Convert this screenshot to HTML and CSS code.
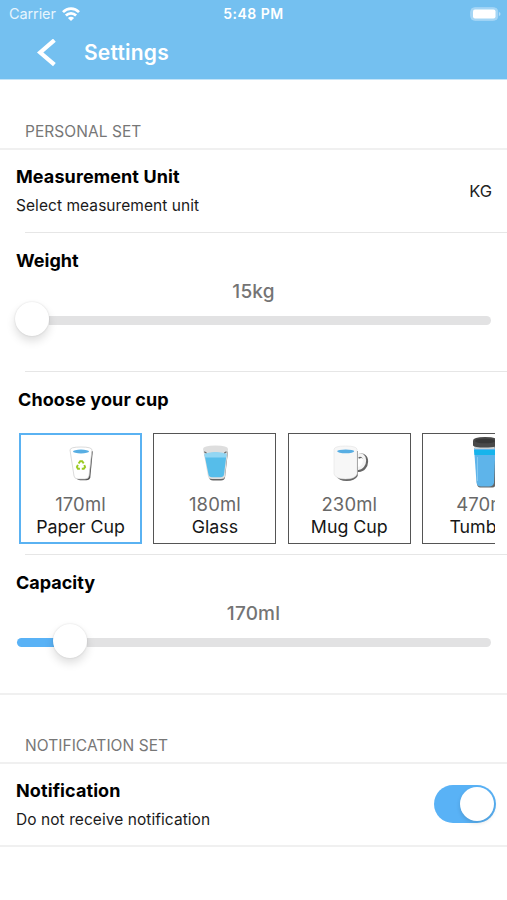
FILE: index.html
```html
<!DOCTYPE html>
<html lang="en">
<head>
<meta charset="utf-8">
<title>Settings</title>
<link rel="stylesheet" href="styles.css">
</head>
<body>
<header class="header">
  <div class="status">
    <div class="carrier"><span>Carrier</span>
      <svg width="18" height="14" viewBox="0 0 18 14" fill="none" stroke="#fff" stroke-width="2.7"><path d="M1 5.1C5.5.5 12.500.5 17 5.100M3.900 8.500C6.800 5.600 11.200 5.600 14.100 8.500"/><path d="M9 14 5.900 11C7.600 9.300 10.400 9.300 12.100 11Z" fill="#fff" stroke="none"/></svg>
    </div>
    <span class="time">5:48 PM</span>
    <svg class="battery" width="32" height="14" viewBox="0 0 32 14"><rect x="1.700" y=".7" width="27" height="12.600" rx="4" fill="#a5d6f5" stroke="#a5d6f5"/><rect x="4" y="2.500" width="22.500" height="9" rx="2" fill="#fff"/><path d="M30 5v4q1.500-.7 1.500-2t-1.500-2" fill="#b3ddf7"/></svg>
  </div>
  <div class="nav">
    <svg width="20" height="28" viewBox="0 0 20 28" fill="none" stroke="#fff" stroke-width="4.200"><path d="M18.400 1.200 4.200 13.500 18.400 25.700"/></svg>
    <h1>Settings</h1>
  </div>
</header>
<main>
  <h2 class="group personal">PERSONAL SET</h2>
  <section class="row">
    <div><h3>Measurement Unit</h3><p>Select measurement unit</p></div>
    <span class="unit">KG</span>
  </section>
  <hr>
  <section class="range weight">
    <h3>Weight</h3>
    <div class="value">15kg</div>
    <div class="slider"><span class="fill"></span><span class="thumb"></span><span class="rest"></span></div>
  </section>
  <hr>
  <section class="cups">
    <h3>Choose your cup</h3>
    <div class="cards">
      <div class="card selected">
        <svg width="50" height="54" viewBox="0 0 50 54"><path d="M15.500 14.500h20l-2.500 26q-.5 3-4 3h-6q-3.500 0-4-3Z" fill="#555" transform="translate(1.300 .8)"/><path d="M14 14q0-3 11-3t11 3l-3 26q-.5 3-4 3h-7q-3.500 0-4-3Z" fill="#fff" stroke="#ccc" stroke-width=".7"/><ellipse cx="25" cy="15.500" rx="8" ry="1.900" fill="#58aee3"/><path d="m22.600 27.500 1.600-2.200h2l1.500 2.100M28.300 29l.8 2.100-1.300 1.600h-2M23.900 32.700h-2l-1-1.700 1-2.200" stroke="#9bca22" stroke-width="1.900" fill="none"/></svg>
        <span class="volume">170ml</span><span class="name">Paper Cup</span>
      </div>
      <div class="card">
        <svg width="50" height="54" viewBox="0 0 50 54"><path d="M15 15h22l-3 26q-.5 3-4 3h-8q-3.500 0-4-3Z" fill="#666" transform="translate(1 .6)"/><path d="M13 13q0-3.500 12.500-3.500t12.500 3.500l-3 27.500q-.5 2.500-4 2.500h-9q-3.500 0-4-2.500Z" fill="#dedede"/><path d="M14.500 18.500q11-4 22 0l-2.500 20q-.4 2.800-3.500 2.800h-8.500q-3 0-3.500-2.800Z" fill="#56bdea"/><path d="M14.500 17.500q11-3 22 0l-.4 4H14.900Z" fill="#92d6f3"/><path d="M14.200 15.800 16.500 17m17.800 0 2.200-1.200" stroke="#666" stroke-width="1.200"/></svg>
        <span class="volume">180ml</span><span class="name">Glass</span>
      </div>
      <div class="card">
        <svg width="50" height="54" viewBox="0 0 50 54"><g fill="none"><path d="M33 20c11-5 10 14 0 13" stroke="#666" stroke-width="4.500" transform="translate(1 .7)"/><path d="M33 20c10-5 10 13 0 12.500" stroke="#f4f4f4" stroke-width="3.300"/></g><path d="M10.500 14h22v25q-3 5-11 5T11 39Z" fill="#666" transform="translate(1.200 1)"/><path d="M10 13.500q0-3.500 11.500-3.500T33 13.500V38q-1.500 5-11.500 5T10 38Z" fill="#f7f7f7" stroke="#ddd" stroke-width=".5"/><ellipse cx="21.700" cy="15.300" rx="8.500" ry="1.900" fill="#58aee3"/></svg>
        <span class="volume">230ml</span><span class="name">Mug Cup</span>
      </div>
      <div class="card">
        <svg width="50" height="54" viewBox="0 0 50 54"><path d="M17 10h18l1.500 34q0 7-4 7H20q-3 0-3-7Z" fill="#666" transform="translate(.8 .6)"/><path d="M15 12h21.500L35 46.500q-.5 4-5 4h-8q-4 0-4.500-4Z" fill="#5eb4ea"/><path d="M15 14h21.500l-.5 5H15.500Z" fill="#16b4ec"/><path d="M15.500 10h20v3h-20Z" fill="#c9d0d3"/><path d="M18.500 21v24" stroke="#85caf2"/><path d="M14 4.500Q14 1 26 1t12 3.500v5q-1 2-12 2t-12-2Z" fill="#494949"/><ellipse cx="26" cy="5" rx="10" ry="2.300" fill="#383838"/></svg>
        <span class="volume">470ml</span><span class="name">Tumbler</span>
      </div>
    </div>
  </section>
  <hr>
  <section class="range capacity">
    <h3>Capacity</h3>
    <div class="value">170ml</div>
    <div class="slider"><span class="fill"></span><span class="thumb"></span><span class="rest"></span></div>
  </section>
  <h2 class="group notice">NOTIFICATION SET</h2>
  <section class="row last">
    <div><h3>Notification</h3><p>Do not receive notification</p></div>
    <span class="toggle"><i></i></span>
  </section>
</main>
</body>
</html>
```
FILE: styles.css
```css
* { box-sizing: border-box; }
body { margin: 0; width: 507px; height: 900px; overflow: hidden; background: #fff; color: #000; font-family: Inter, "Liberation Sans", sans-serif; }
h1, h2, h3, p { margin: 0; }
svg { display: block; flex: none; }
.header { height: 79px; background: #74c0f0; color: #fff; box-shadow: 0 1px 0 #c4e4f8; }
.status { height: 27px; display: grid; grid-template-columns: 1fr auto 1fr; padding: 0 6px 0 9px; align-items: center; font-size: 14px; }
.carrier { display: flex; gap: 6px; align-items: center; color: #e7f5fd; font-size: 14.5px; letter-spacing: -.1px; }
.time { font-weight: 600; letter-spacing: .5px; margin-right: 3px; }
.battery { justify-self: end; }
.nav { height: 52px; display: flex; align-items: center; padding-left: 36px; gap: 28px; }
h1 { font-size: 21px; line-height: 50px; font-weight: 600; letter-spacing: .2px; }
.group { color: #777; font-size: 15.5px; font-weight: 400; padding-left: 25px; letter-spacing: .05px; border-bottom: 2px solid #f0f0f0; }
.personal { height: 71px; line-height: 106px; }
.notice { height: 71px; line-height: 101px; border-top: 2px solid #f0f0f0; }
h3 { font-size: 18px; line-height: 24px; font-weight: 700; letter-spacing: .1px; }
.row { height: 82px; display: flex; justify-content: space-between; padding: 15px 15px 0 16px; }
.row p { font-size: 15.5px; line-height: 22px; margin-top: 6px; color: #1a1a1a; letter-spacing: .06px; }
.unit { font-size: 16.5px; line-height: 24px; margin-top: 14px; color: #222; }
.last { border-bottom: 2px solid #f0f0f0; height: 83px; padding-right: 11px; }
hr { border: 0; height: 1px; margin: 0 0 0 25px; background: #e6e6e6; }
.range { height: 138px; padding: 16px 16px 0; }
.range h3 { letter-spacing: 0; }
.value { font-size: 19px; line-height: 24px; font-weight: 500; color: #747474; text-align: center; margin-top: 7px; letter-spacing: .2px; }
.slider { height: 32px; display: flex; align-items: center; }
.fill { width: 37px; height: 9px; border-radius: 5px 0 0 5px; background: #59b2f6; margin-left: 1px; }
.weight .fill { width: 0; margin: 0; }
.thumb { width: 34px; height: 34px; border-radius: 50%; background: #fff; box-shadow: 0 5px 10px #0002, 0 0 2px #0002; margin: -3px 0 0 -1px; z-index: 1; }
.rest { flex: 1; height: 9px; background: #e2e2e3; border-radius: 0 5px 5px 0; }
.cups { height: 182px; padding: 16px 12px 0 19px; }
.cups h3 { margin-left: -1px; }
.cards { display: flex; gap: 11.4px; overflow: hidden; margin-top: 21px; }
.card { width: 123px; height: 111px; border: 1.5px solid #555; flex: none; display: flex; flex-direction: column; align-items: center; }
.selected { border: 2px solid #5ab2f2; }
.card svg { margin-top: 2px; }
.selected svg { margin-top: 1px; }
.volume { font-size: 18.5px; line-height: 24px; color: #686868; margin-top: 2px; letter-spacing: .1px; }
.name { font-size: 17.8px; line-height: 22px; color: #161616; }
.toggle { width: 62px; height: 38px; margin-top: 6px; padding: 2px; border-radius: 19px; background: #59b2f6; display: flex; justify-content: flex-end; }
.toggle i { width: 34px; height: 34px; background: #fff; border-radius: 50%; box-shadow: 0 2px 4px #0002; }
```
